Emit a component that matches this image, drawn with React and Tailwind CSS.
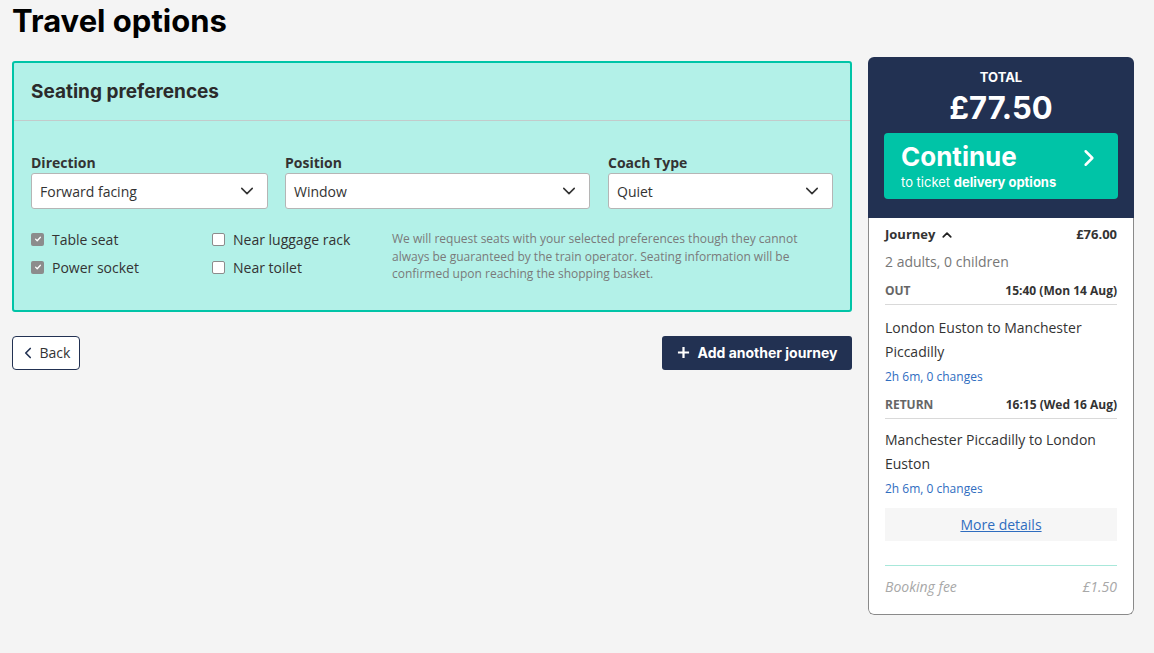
import React from "react";

const Chevron = ({ dir = "down", className = "", sw = 2 }) => {
  const paths = {
    down: "M2 5l6 6 6-6",
    up: "M2 11l6-6 6 6",
    left: "M11 2L5 8l6 6",
    right: "M5 2l6 6-6 6",
  };
  return (
    <svg viewBox="0 0 16 16" className={className} fill="none" stroke="currentColor" strokeWidth={sw} strokeLinecap="round" strokeLinejoin="round">
      <path d={paths[dir]} />
    </svg>
  );
};

const Select = ({ value }) => (
  <div className="h-[36px] bg-white border border-[#b5b5b5] rounded-[3px] flex items-center justify-between pl-[8px] pr-[13px] text-[14px] text-[#333]">
    <span>{value}</span>
    <Chevron dir="down" className="w-[14px] h-[14px] text-[#333]" sw={1.8} />
  </div>
);

const Check = ({ checked, label }) => (
  <div className="flex items-center gap-[8px] h-[20px] text-[14px] text-[#333]">
    {checked ? (
      <span className="w-[13px] h-[13px] rounded-[2px] bg-[#8c8c8c] flex items-center justify-center">
        <svg viewBox="0 0 10 10" className="w-[8px] h-[8px]" fill="none" stroke="white" strokeWidth="1.6" strokeLinecap="round" strokeLinejoin="round">
          <path d="M2 5.2l2 2 4-4.4" />
        </svg>
      </span>
    ) : (
      <span className="w-[13px] h-[13px] rounded-[2px] bg-white border border-[#8c8c8c]" />
    )}
    <span>{label}</span>
  </div>
);

const head = "font-['Inter',sans-serif]";

export default function App() {
  return (
    <div className="min-h-screen bg-[#f4f4f4] font-['Open_Sans',sans-serif] text-[#333]">
      <div className="pl-3 pr-5 pt-[3px]">
        <h1 className={`${head} text-[31px] leading-[36px] font-bold text-black`}>Travel options</h1>
        <div className="flex gap-4 mt-[18px] items-start">
          <div className="flex-1 mt-[4px]">
            <div className="border-2 border-[#00c4a7] bg-[#b3f1e8] rounded-[3px]">
              <div className="h-[58px] border-b border-[#c3cbcb] px-[17px] flex items-center pt-[2px]">
                <h2 className={`${head} text-[19px] font-bold text-[#2b2b2b]`}>Seating preferences</h2>
              </div>
              <div className="px-[17px] pt-[32px] pb-[27px]">
                <div className="grid grid-cols-[237px_305px_1fr] gap-x-[17px]">
                  <div>
                    <div className="text-[14px] leading-[20px] font-bold text-[#333]">Direction</div>
                    <Select value="Forward facing" />
                  </div>
                  <div>
                    <div className="text-[14px] leading-[20px] font-bold text-[#333]">Position</div>
                    <Select value="Window" />
                  </div>
                  <div className="ml-[1px]">
                    <div className="text-[14px] leading-[20px] font-bold text-[#333]">Coach Type</div>
                    <Select value="Quiet" />
                  </div>
                </div>
                <div className="grid grid-cols-[181px_180px_1fr] mt-[20px]">
                  <div className="flex flex-col gap-[8px]">
                    <Check checked label="Table seat" />
                    <Check checked label="Power socket" />
                  </div>
                  <div className="flex flex-col gap-[8px]">
                    <Check label="Near luggage rack" />
                    <Check label="Near toilet" />
                  </div>
                  <p className="text-[12px] leading-[17.5px] text-[#7a7a7a] pr-[20px] pt-[1px]">
                    We will request seats with your selected preferences though they cannot always be guaranteed by the train operator. Seating information will be confirmed upon reaching the shopping basket.
                  </p>
                </div>
              </div>
            </div>
            <div className="flex justify-between mt-6">
              <button className="h-[34px] w-[68px] bg-white border border-[#223152] rounded-[4px] flex items-center justify-center gap-[6px] text-[14px] text-[#333]">
                <Chevron dir="left" className="w-[12px] h-[12px] text-[#223152]" sw={2.2} />
                <span>Back</span>
              </button>
              <button className={`${head} h-[34px] w-[190px] bg-[#223152] rounded-[3px] flex items-center justify-center gap-[8px] text-[14px] font-bold text-white`}>
                <svg viewBox="0 0 14 14" className="w-[13px] h-[13px]" fill="none" stroke="white" strokeWidth="2.4">
                  <path d="M7 1v12M1 7h12" />
                </svg>
                <span>Add another journey</span>
              </button>
            </div>
          </div>

          <div className="w-[266px] rounded-[6px] overflow-hidden">
            <div className="bg-[#223152] px-[16px] pt-[12px] pb-[19px] text-white text-center">
              <div className={`${head} text-[13px] leading-[16px] font-bold`}>TOTAL</div>
              <div className={`${head} text-[31px] leading-[36px] font-bold mt-[5px]`}>£77.50</div>
              <div className="mt-[7px] h-[66px] bg-[#00c4a7] rounded-[4px] flex items-center justify-between pl-[17px] pr-[20px] text-left">
                <div>
                  <div className={`${head} text-[26px] leading-[30px] font-bold`}>Continue</div>
                  <div className={`${head} text-[13px] leading-[18px] mt-[1px]`}>
                    to ticket <span className="font-bold">delivery options</span>
                  </div>
                </div>
                <Chevron dir="right" className="w-[18px] h-[18px] text-white mb-[16px]" sw={2.2} />
              </div>
            </div>
            <div className="bg-white border-x border-b border-[#8a8a8a] rounded-b-[6px] px-[16px] pt-[7px] pb-[17px]">
              <div className="flex justify-between items-center h-[20px] text-[13px] font-bold text-[#333]">
                <div className="flex items-center gap-[7px]">
                  <span>Journey</span>
                  <Chevron dir="up" className="w-[10px] h-[10px] text-[#222]" sw={2.8} />
                </div>
                <span>£76.00</span>
              </div>
              <div className="mt-[7px] text-[14px] leading-[20px] text-[#777]">2 adults, 0 children</div>
              <div className="mt-[11px] pb-[5px] border-b border-[#d9d9d9] flex justify-between text-[12px] leading-[16px] font-bold">
                <span className="text-[#666]">OUT</span>
                <span className="text-[#333]">15:40 (Mon 14 Aug)</span>
              </div>
              <div className="mt-[11px] text-[14px] leading-[24px] text-[#333]">London Euston to Manchester Piccadilly</div>
              <div className="mt-[5px] text-[12px] leading-[16px] text-[#2f6dbf]">2h 6m, 0 changes</div>
              <div className="mt-[12px] pb-[5px] border-b border-[#d9d9d9] flex justify-between text-[12px] leading-[16px] font-bold">
                <span className="text-[#666]">RETURN</span>
                <span className="text-[#333]">16:15 (Wed 16 Aug)</span>
              </div>
              <div className="mt-[9px] text-[14px] leading-[24px] text-[#333]">Manchester Piccadilly to London Euston</div>
              <div className="mt-[5px] text-[12px] leading-[16px] text-[#2f6dbf]">2h 6m, 0 changes</div>
              <div className="mt-[11px] h-[33px] bg-[#f6f6f6] flex items-center justify-center text-[14px] text-[#2f6dbf] underline">More details</div>
              <div className="mt-[24px] border-t border-[#a8e8da]" />
              <div className="mt-[11px] flex justify-between text-[14px] leading-[20px] italic text-[#a8a8a8]">
                <span>Booking fee</span>
                <span>£1.50</span>
              </div>
            </div>
          </div>
        </div>
      </div>
    </div>
  );
}
